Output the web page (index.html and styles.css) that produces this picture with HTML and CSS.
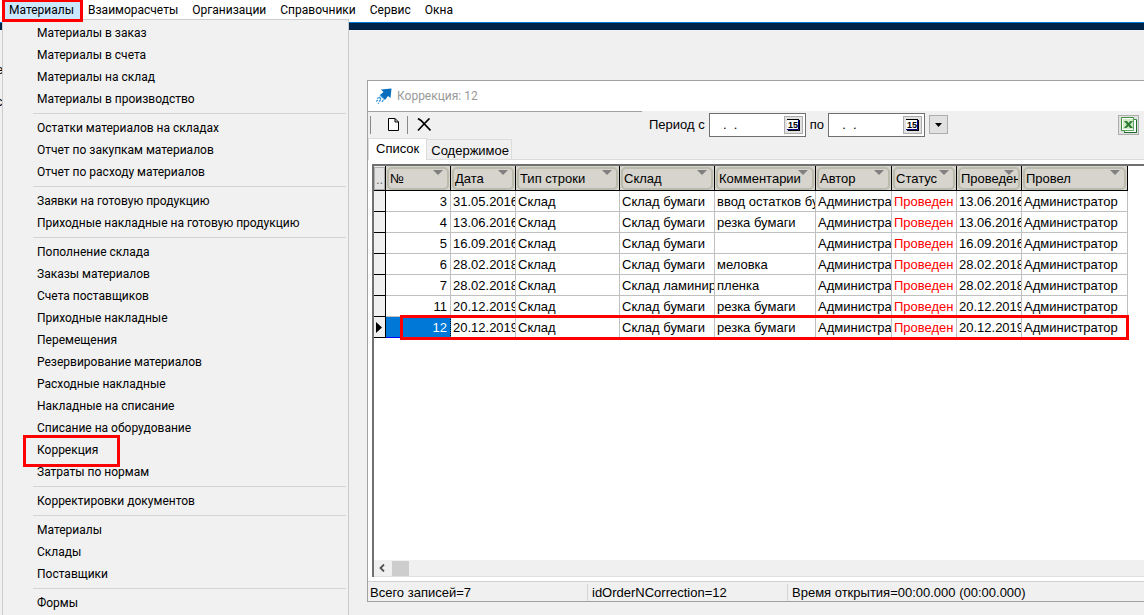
FILE: index.html
```html
<!DOCTYPE html>
<html lang="ru">
<head>
<meta charset="utf-8">
<title>Коррекция: 12</title>
<link rel="stylesheet" href="styles.css">
</head>
<body>
<nav class="menubar">
  <div class="menu-root">
    <button class="menu-title menu-title-open" type="button">Материалы</button>
    <ul class="dropdown">
      <li><button type="button">Материалы в заказ</button></li>
      <li><button type="button">Материалы в счета</button></li>
      <li><button type="button">Материалы на склад</button></li>
      <li><button type="button">Материалы в производство</button></li>
      <li class="separator"></li>
      <li><button type="button">Остатки материалов на складах</button></li>
      <li><button type="button">Отчет по закупкам материалов</button></li>
      <li><button type="button">Отчет по расходу материалов</button></li>
      <li class="separator"></li>
      <li><button type="button">Заявки на готовую продукцию</button></li>
      <li><button type="button">Приходные накладные на готовую продукцию</button></li>
      <li class="separator"></li>
      <li><button type="button">Пополнение склада</button></li>
      <li><button type="button">Заказы материалов</button></li>
      <li><button type="button">Счета поставщиков</button></li>
      <li><button type="button">Приходные накладные</button></li>
      <li><button type="button">Перемещения</button></li>
      <li><button type="button">Резервирование материалов</button></li>
      <li><button type="button">Расходные накладные</button></li>
      <li><button type="button">Накладные на списание</button></li>
      <li><button type="button">Списание на оборудование</button></li>
      <li class="marked"><button type="button">Коррекция</button></li>
      <li><button type="button">Затраты по нормам</button></li>
      <li class="separator"></li>
      <li><button type="button">Корректировки документов</button></li>
      <li class="separator"></li>
      <li><button type="button">Материалы</button></li>
      <li><button type="button">Склады</button></li>
      <li><button type="button">Поставщики</button></li>
      <li class="separator"></li>
      <li><button type="button">Формы</button></li>
    </ul>
  </div>
  <button class="menu-title" type="button">Взаиморасчеты</button>
  <button class="menu-title" type="button">Организации</button>
  <button class="menu-title" type="button">Справочники</button>
  <button class="menu-title" type="button">Сервис</button>
  <button class="menu-title" type="button">Окна</button>
</nav>
<div class="band"></div>
<main class="workspace">
  <div class="behind"><span>е</span><span>с</span></div>
  <section class="window">
    <header class="titlebar">
      <svg width="16" height="16" viewBox="0 0 16 16"><path d="M5 1.500L15.500 0.500L14.500 10L12 8L9 12L4 7L7.500 4Z" fill="#0a6ebd"/><path d="M4 7L7 10M3 9L5 11M1 10.500L3 9.500M0 13.500L2 12M3 13.500L5 11.500M6 14L7.500 11.500M2 15.500L3 15" stroke="#3b9bdc" stroke-width="1.300" fill="none"/></svg>
      <span>Коррекция: 12</span>
    </header>
    <div class="toolbar">
      <span class="grip"></span>
      <button class="tool" type="button" aria-label="Создать"><svg width="13" height="14" viewBox="0 0 13 14"><path d="M1.500 .500H8L11.500 4V12.500H1.500ZM8 .500V4H11.500" fill="#fff" stroke="#000"/></svg></button>
      <span class="grip"></span>
      <button class="tool" type="button" aria-label="Удалить"><svg width="14" height="14" viewBox="0 0 14 14"><path d="M1 0.500L4 2.500L13.500 12.500M12.500 0.500L7 6L1 12.500" stroke="#000" stroke-width="1.700" fill="none"/></svg></button>
      <div class="period">
        <label for="from">Период с</label>
        <span class="date"><input id="from" type="text" value="  .  ."><button type="button" aria-label="Календарь"><svg width="13" height="12" viewBox="0 0 13 12"><path d="M0 1H11V10H0Z" fill="#fff"/><path d="M0 .5H12M12.500 1V12M1 11.500H12" stroke="#000" fill="none"/><path d="M11.500 1V10.500H0" stroke="#00007a" fill="none"/><text x="1" y="9" class="day">15</text></svg></button></span>
        <label for="to">по</label>
        <span class="date"><input id="to" type="text" value="  .  ."><button type="button" aria-label="Календарь"><svg width="13" height="12" viewBox="0 0 13 12"><path d="M0 1H11V10H0Z" fill="#fff"/><path d="M0 .5H12M12.500 1V12M1 11.500H12" stroke="#000" fill="none"/><path d="M11.500 1V10.500H0" stroke="#00007a" fill="none"/><text x="1" y="9" class="day">15</text></svg></button></span>
        <button class="flat" type="button" aria-label="Выбор периода"><svg width="7" height="4" viewBox="0 0 7 4"><path d="M0 0H7L3.500 4Z"/></svg></button>
      </div>
      <button class="flat excel" type="button" aria-label="Excel"><svg width="16" height="16" viewBox="0 0 16 16"><path d="M.5 .5H12.500V2.500H15.500V15.500H3.500V13.500H.5Z" fill="#fff" stroke="#3f8f3f"/><path d="M2 2H12V12H2Z" fill="#cfe8c6"/><path d="M3 4H6L7.500 6L9.500 4H12L9 7.500L12 11H9L7.500 9L5.500 11H3L6 7.500Z" fill="#2d7d32"/><path d="M12.500 2.500V13.500H3.500" fill="none" stroke="#5fa65f"/><path d="M3 15.500H15.500V3" fill="none" stroke="#1f6a27"/></svg></button>
    </div>
    <div class="tabs">
      <button class="tab tab-active" type="button">Список</button>
      <button class="tab" type="button">Содержимое</button>
    </div>
    <div class="panel">
      <div class="grid">
        <table>
          <colgroup><col class="c-mark"><col class="c-s"><col class="c-s"><col class="c-type"><col class="c-store"><col class="c-note"><col class="c-author"><col class="c-s"><col class="c-s"><col class="c-by"></colgroup>
          <thead>
            <tr><th class="corner"><span>..</span></th><th><button type="button">№</button></th><th><button type="button">Дата</button></th><th><button type="button">Тип строки</button></th><th><button type="button">Склад</button></th><th><button type="button">Комментарии</button></th><th><button type="button">Автор</button></th><th><button type="button">Статус</button></th><th><button type="button">Проведен</button></th><th><button type="button">Провел</button></th></tr>
          </thead>
          <tbody>
            <tr><td></td><td>3</td><td>31.05.2016</td><td>Склад</td><td>Склад бумаги</td><td>ввод остатков бумаги</td><td>Администратор</td><td>Проведен</td><td>13.06.2016</td><td>Администратор</td></tr>
            <tr><td></td><td>4</td><td>13.06.2016</td><td>Склад</td><td>Склад бумаги</td><td>резка бумаги</td><td>Администратор</td><td>Проведен</td><td>13.06.2016</td><td>Администратор</td></tr>
            <tr><td></td><td>5</td><td>16.09.2016</td><td>Склад</td><td>Склад бумаги</td><td></td><td>Администратор</td><td>Проведен</td><td>16.09.2016</td><td>Администратор</td></tr>
            <tr><td></td><td>6</td><td>28.02.2018</td><td>Склад</td><td>Склад бумаги</td><td>меловка</td><td>Администратор</td><td>Проведен</td><td>28.02.2018</td><td>Администратор</td></tr>
            <tr><td></td><td>7</td><td>28.02.2018</td><td>Склад</td><td>Склад ламинир</td><td>пленка</td><td>Администратор</td><td>Проведен</td><td>28.02.2018</td><td>Администратор</td></tr>
            <tr><td></td><td>11</td><td>20.12.2019</td><td>Склад</td><td>Склад бумаги</td><td>резка бумаги</td><td>Администратор</td><td>Проведен</td><td>20.12.2019</td><td>Администратор</td></tr>
            <tr class="current"><td><svg width="6" height="11" viewBox="0 0 6 11"><path d="M0 0L6 5.500L0 11Z"/></svg></td><td>12</td><td>20.12.2019</td><td>Склад</td><td>Склад бумаги</td><td>резка бумаги</td><td>Администратор</td><td>Проведен</td><td>20.12.2019</td><td>Администратор</td></tr>
          </tbody>
        </table>
        <div class="scroll"><svg width="6" height="8" viewBox="0 0 6 8"><path d="M5 .500L1.500 4L5 7.500" stroke="#505050" stroke-width="1.800" fill="none"/></svg><span class="thumb"></span></div>
      </div>
    </div>
    <footer class="status"><span>Всего записей=7</span><span>idOrderNCorrection=12</span><span>Время открытия=00:00.000 (00:00.000)</span></footer>
  </section>
</main>
</body>
</html>
```
FILE: styles.css
```css
*, *::before, *::after { box-sizing: border-box; }
body {
  margin: 0;
  height: 100vh;
  display: flex;
  flex-direction: column;
  overflow: hidden;
  background: #f0f0f0;
  color: #000;
  font: 13px/16px "Liberation Sans", Arial, sans-serif;
}
button {
  margin: 0;
  padding: 0;
  border: 0;
  background: none;
  color: inherit;
  font: inherit;
  text-align: left;
}
svg { display: block; }

.menubar {
  display: flex;
  height: 22px;
  padding-left: 2px;
  background: #fff;
  font: 12px/18px Roboto, "Open Sans", sans-serif;
}
.menu-root { position: relative; z-index: 5; }
.menu-title { height: 20px; padding: 0 7px; }
.menu-title-open {
  position: relative;
  z-index: 2;
  background: #cce8ff;
  border-bottom: 1px solid #99d1ff;
}
.menu-title-open::after {
  content: "";
  position: absolute;
  inset: -1px -2px -3px 0;
  border: 3px solid #f00;
}
.dropdown {
  position: absolute;
  left: 0;
  top: 19px;
  width: 347px;
  margin: 0;
  padding: 2px;
  list-style: none;
  background: #f1f1f1;
  border: 1px solid #ccc;
}
.dropdown li { height: 22px; position: relative; }
.dropdown button { width: 100%; height: 22px; padding-left: 32px; }
.dropdown .separator { height: 7px; padding: 3px 0 3px 28px; }
.separator::before { content: ""; display: block; height: 1px; background: #d4d4d4; }
.marked::after {
  content: "";
  position: absolute;
  z-index: 1;
  left: 18px;
  top: -4px;
  width: 97px;
  height: 32px;
  border: 3px solid #f00;
}

.band { height: 8px; border-top: 1px solid #0078d7; background: #002447; }
.workspace {
  flex: 1;
  display: flex;
  padding: 50px 0 13px 0;
}
.behind {
  display: flex;
  flex-direction: column;
  gap: 16px;
  flex: 0 0 367px;
  margin-top: -18px;
  text-indent: -4px;
}
.window {
  flex: 1;
  min-width: 0;
  display: flex;
  flex-direction: column;
  border: solid #a0a0a0;
  border-width: 1px 0 1px 1px;
}
.titlebar {
  display: flex;
  gap: 5px;
  align-items: center;
  height: 30px;
  padding-left: 8px;
  background: #fff;
  color: #999;
  font: 12px/16px Roboto, "Open Sans", sans-serif;
}
.toolbar {
  display: flex;
  align-items: center;
  height: 27px;
  padding: 0 5px 0 2px;
  background: linear-gradient(#a0a0a0, #a0a0a0) 0 0 / 274px 1px no-repeat;
}
.grip { width: 1px; height: 18px; background: #888; }
.tool { height: 22px; }
.tool:nth-of-type(1) { padding: 4px 7px 4px 16px; }
.tool:nth-of-type(2) { padding: 4px 9px; }
.period { display: flex; align-items: center; margin-left: 209px; gap: 4px; }
.date {
  display: flex;
  width: 97px;
  height: 24px;
  padding: 2px;
  background: #fff;
  border: 1px solid #707070;
}
.date input {
  flex: 1;
  min-width: 0;
  padding: 0 0 0 4px;
  border: 0;
  outline: 0;
  background: none;
  font: inherit;
  white-space: pre;
}
.date button, .flat {
  display: flex;
  align-items: center;
  justify-content: center;
  width: 19px;
  height: 18px;
  background: #e1e1e1;
  border: 1px solid #adadad;
}
.day { font: bold 9px "Liberation Sans", sans-serif; }
.period .flat { height: 19px; }
.flat.excel { width: 21px; height: 20px; margin-left: auto; }

.tabs { display: flex; align-items: flex-end; height: 22px; border-bottom: 1px solid #dcdcdc; }
.tab { height: 20px; padding: 2px 2px 0 4px; border: solid #dcdcdc; border-width: 1px 1px 0 0; }
.tab-active { height: 22px; margin-bottom: -1px; padding: 0 7px 2px; border-left-width: 1px; background: #fff; }
.panel { flex: 1; display: flex; padding: 4px 0 4px 4px; background: #fff; }
.grid {
  flex: 1;
  min-width: 0;
  display: flex;
  flex-direction: column;
  border: solid #707070;
  border-width: 2px 0 0 2px;
}
table { width: 754px; table-layout: fixed; border-spacing: 0; }
.c-mark { width: 12px; }
.c-s { width: 65px; }
.c-type { width: 104px; }
.c-store { width: 95px; }
.c-note { width: 101px; }
.c-author { width: 76px; }
.c-by { width: 106px; }
th {
  height: 25px;
  padding: 0;
  background: #d6d4cc;
  border: solid #000;
  border-width: 0 1px 1px 0;
  font-weight: normal;
}
th button {
  position: relative;
  display: block;
  width: calc(100% - 2px);
  height: 23px;
  margin: 0 1px;
  border: 2px solid #babaad;
  border-radius: 5px;
  overflow: hidden;
  line-height: 20px;
  padding-left: 1px;
  white-space: nowrap;
}
th button::after {
  content: "";
  position: absolute;
  right: 4px;
  top: 1px;
  border: solid transparent;
  border-width: 5px 5px 0;
  border-top-color: #808080;
}
.corner { background: #f0f0f0; }
.corner span { display: block; height: 23px; border: 1px solid #adadad; background: #e1e1e1; line-height: 24px; color: #666; }
td {
  height: 21px;
  padding: 1px 0 0 2px;
  border: solid #c0c0c0;
  border-width: 0 1px 1px 0;
  overflow: hidden;
  white-space: nowrap;
  line-height: 19px;
}
td:first-child { background: #f0f0f0; border-color: #000; }
td:nth-child(2) { padding: 1px 3px 0 0; text-align: right; }
td:nth-child(8) { color: #f00; }
.current { position: relative; }
.current td { border-bottom-color: #00f; }
.current td:first-child { border-bottom-color: #000; }
.current td:nth-child(2) { background: #0078d7; color: #fff; border-right: 1px dotted #000; }
.current::after {
  content: "";
  position: absolute;
  inset: -2px -1px -2px 26px;
  border: 3px solid #f00;
}
.scroll {
  display: flex;
  align-items: center;
  gap: 7px;
  height: 17px;
  margin-top: auto;
  padding-left: 5px;
  background: #f0f0f0;
  border-bottom: 1px solid #e0e0e0;
}
.thumb { width: 17px; height: 15px; background: #cdcdcd; }
.status {
  display: flex;
  height: 20px;
  border-top: 1px solid #d0d0d0;
  padding: 2px 0 0 2px;
  line-height: 18px;
}
.status span:nth-child(-n+2) { width: 218px; border-right: 1px solid #d4d4d4; }
.status span:nth-child(2) { width: 200px; }
.status span + span { padding-left: 4px; }
```
